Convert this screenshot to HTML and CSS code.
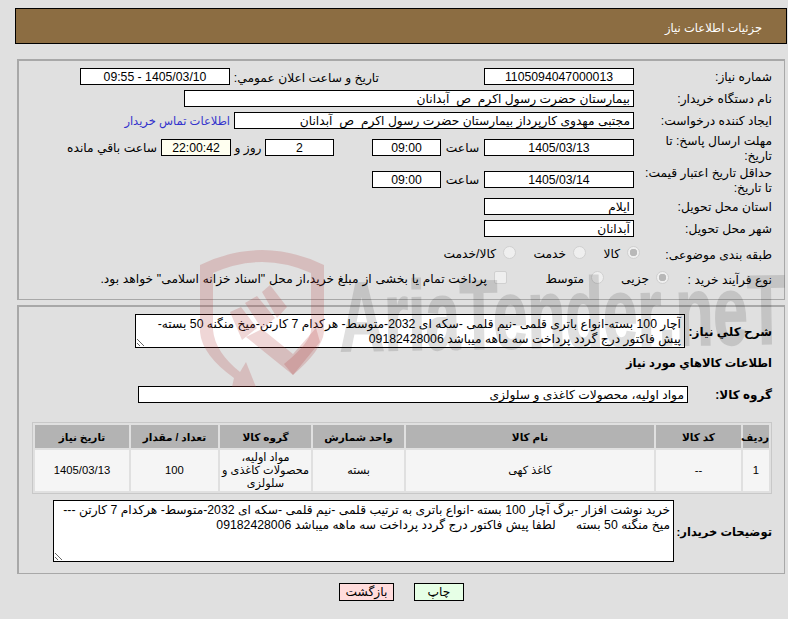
FILE: index.html
```html
<!DOCTYPE html>
<html lang="fa" dir="rtl">
<head>
  <meta charset="UTF-8">
  <title>جزئیات اطلاعات نیاز</title>
  <link rel="stylesheet" href="styles.css">
</head>
<body>
  <header class="title-bar">جزئیات اطلاعات نیاز</header>

  <!-- Need details -->
  <section class="panel panel-top">
    <div class="row">
      <label class="lbl">شماره نیاز:</label>
      <div class="box w150 center">1105094047000013</div>
      <label class="lbl-public">تاریخ و ساعت اعلان عمومي:</label>
      <div class="box w150 center">1405/03/10 - 09:55</div>
    </div>
    <div class="row">
      <label class="lbl">نام دستگاه خریدار:</label>
      <div class="box w450">بیمارستان حضرت رسول اکرم &nbsp;ص &nbsp;آبدانان</div>
    </div>
    <div class="row">
      <label class="lbl">ایجاد کننده درخواست:</label>
      <div class="box w400">مجتبی مهدوی کارپرداز بیمارستان حضرت رسول اکرم &nbsp;ص &nbsp;آبدانان</div>
      <a class="contact" href="#">اطلاعات تماس خریدار</a>
    </div>
    <div class="row row-tall">
      <label class="lbl">مهلت ارسال پاسخ: تا تاریخ:</label>
      <div class="box w150 center">1405/03/13</div>
      <span class="word word-hour">ساعت</span>
      <div class="box w69 center">09:00</div>
      <div class="box w69 days center">2</div>
      <span class="word word-day">روز و</span>
      <div class="box clock center">22:00:42</div>
      <span class="word word-left">ساعت باقي مانده</span>
    </div>
    <div class="row row-tall">
      <label class="lbl">حداقل تاریخ اعتبار قیمت: تا تاریخ:</label>
      <div class="box w150 center">1405/03/14</div>
      <span class="word word-hour">ساعت</span>
      <div class="box w69 center">09:00</div>
    </div>
    <div class="row">
      <label class="lbl">استان محل تحویل:</label>
      <div class="box w150">ایلام</div>
    </div>
    <div class="row">
      <label class="lbl">شهر محل تحویل:</label>
      <div class="box w150">آبدانان</div>
    </div>
    <div class="row row-options subject">
      <label class="lbl">طبقه بندی موضوعی:</label>
      <input class="radio" type="radio" name="subject" checked disabled><span class="opt opt-goods">کالا</span>
      <input class="radio" type="radio" name="subject" disabled><span class="opt opt-service">خدمت</span>
      <input class="radio" type="radio" name="subject" disabled><span class="opt">کالا/خدمت</span>
    </div>
    <div class="row row-options process">
      <label class="lbl">نوع فرآیند خرید :</label>
      <input class="radio" type="radio" name="process" checked disabled><span class="opt opt-minor">جزیی</span>
      <input class="radio" type="radio" name="process" disabled><span class="opt opt-medium">متوسط</span>
      <input class="check" type="checkbox" disabled><span class="opt opt-long">پرداخت تمام یا بخشی از مبلغ خرید،از محل "اسناد خزانه اسلامی" خواهد بود.</span>
    </div>
  </section>

  <!-- Goods -->
  <section class="panel panel-goods">
    <div class="row row-desc">
      <label class="lbl strong">شرح کلي نیاز:</label>
      <textarea class="area area-need" readonly>آچار 100 بسته-انواع باتری قلمی -نیم قلمی -سکه ای 2032-متوسط- هرکدام 7 کارتن-میخ منگنه 50 بسته- پیش فاکتور درج گردد پرداخت سه ماهه میباشد 09182428006</textarea>
    </div>
    <h3 class="goods-head">اطلاعات کالاهاي مورد نیاز</h3>
    <div class="row row-group">
      <label class="lbl strong">گروه کالا:</label>
      <div class="box w550">مواد اولیه، محصولات کاغذی و سلولزی</div>
    </div>
    <table class="goods">
      <thead>
        <tr>
          <th class="c-row">ردیف</th>
          <th class="c-code">کد کالا</th>
          <th class="c-name">نام کالا</th>
          <th class="c-unit">واحد شمارش</th>
          <th class="c-group">گروه کالا</th>
          <th class="c-qty">تعداد / مقدار</th>
          <th class="c-date">تاریخ نیاز</th>
        </tr>
      </thead>
      <tbody>
        <tr>
          <td>1</td>
          <td>--</td>
          <td>کاغذ کهی</td>
          <td>بسته</td>
          <td>مواد اولیه، محصولات کاغذی و سلولزی</td>
          <td>100</td>
          <td>1405/03/13</td>
        </tr>
      </tbody>
    </table>
    <div class="row row-notes">
      <label class="lbl strong">توضیحات خریدار:</label>
      <textarea class="area area-notes" readonly>خرید نوشت افزار -برگ آچار 100 بسته -انواع باتری به ترتیب قلمی -نیم قلمی -سکه ای 2032-متوسط- هرکدام 7 کارتن --- میخ منگنه 50 بسته      لطفا پیش فاکتور درج گردد پرداخت سه ماهه میباشد 09182428006</textarea>
    </div>
  </section>

  <div class="actions">
    <button class="btn btn-print" type="button">چاپ</button>
    <button class="btn btn-back" type="button">بازگشت</button>
  </div>

  <!-- Watermark over the page -->
  <svg class="watermark" width="788" height="619" viewBox="0 0 788 619" aria-hidden="true">
    <g class="mark-red">
      <path d="M200 265 Q262 235 324 265 L324 332 Q322 350 293 375 L284 364 Q311 342 311 330 L311 273 Q262 251 213 273 L213 330 Q215 352 240 372 L246 362 L256 387 L232 387 L234 378 Q202 355 200 332 Z"/>
      <polygon points="230,312 241,307 257,328 242,340"/>
      <polygon points="245,303 257,296 275,318 262,329"/>
      <polygon points="262,292 270,285 287,307 277,318"/>
      <polygon points="246,337 262,329 293,354 316,328 320,342 293,375"/>
    </g>
    <text class="mark-text" x="340" y="351" textLength="446" lengthAdjust="spacingAndGlyphs" transform="rotate(-1 340 351)">AriaTender.neT</text>
  </svg>
</body>
</html>
```

FILE: styles.css
```css
/* Reset & base */
* { box-sizing: border-box; }
body { margin: 0; padding: 8px 0 0 15px; width: 788px; height: 619px; overflow: hidden; position: relative; background: #e0e0e0; color: #000; font-family: "Liberation Sans", "DejaVu Sans", sans-serif; font-size: 12.25px; }

/* Header */
.title-bar { height: 36px; line-height: 38px; margin-right: 1px; padding-right: 24px; background: #8c6d42; border: 1px solid #000; color: #fff; font-size: 11.5px; }

/* Panels */
.panel { margin: 0 3px 0 2px; border: 1px solid #a8a8a8; border-width: 2px 1px 1px 2px; padding: 0 12px; }
.panel-top { margin-top: 15px; height: 241px; padding-top: 7px; }
.panel-goods { margin-top: 5px; height: 269px; padding-top: 7px; }

/* Form rows */
.row { display: flex; align-items: center; min-height: 17px; margin-bottom: 5px; }
.row-tall { height: 27px; }
.row-options { height: 24px; margin-bottom: 1px; }
.lbl { flex: none; width: 138px; padding: 2px 0 0 7px; line-height: 15px; }
.lbl-public { flex: none; width: 144px; margin: 0 105px 0 5px; padding-top: 2px; white-space: nowrap; }
.strong { font-weight: bold; font-size: 12px; white-space: nowrap; }

.box { flex: none; height: 17px; line-height: 16px; padding: 0 3px; background: #fff; border: 1px solid #000; white-space: nowrap; overflow: hidden; }
.center { text-align: center; }
.w69 { width: 69px; }
.w150 { width: 150px; }
.w400 { width: 400px; }
.w450 { width: 450px; }
.w550 { width: 550px; }
.clock { width: 70px; background: #fffff0; }
.days { margin-right: 38px; }
.contact { margin-right: 4px; padding-top: 1px; color: #3333cc; font-size: 11.5px; text-decoration: none; white-space: nowrap; }

.word { flex: none; padding-top: 1px; white-space: nowrap; }
.word-hour { width: 43px; text-align: center; }
.word-day { width: 34px; text-align: center; }
.word-left { margin-right: 4px; }

/* Options */
.radio, .check { appearance: none; flex: none; margin: 0; width: 13px; height: 13px; background: #efefef; border: 1px solid #d0d0d0; position: relative; top: -2px; }
.radio { border-radius: 50%; }
.radio:checked { background: radial-gradient(circle, #b8b8b8 0 3.5px, #efefef 4px); }
.check { border-radius: 2px; }
.opt { margin-right: 7px; white-space: nowrap; }
.subject .lbl { width: 132px; }
.process .lbl { width: 103px; }
.opt-goods { width: 34px; }
.opt-service { width: 50px; }
.opt-minor { width: 45px; }
.opt-medium { width: 77px; }
.opt-long { word-spacing: 0.4px; }

/* Text areas */
.area { flex: none; display: block; padding: 2px 3px 0; background: #fff; border: 1px solid #000; border-radius: 0; font: inherit; line-height: 15px; color: #000; overflow: hidden; outline: none; }
.area-need { width: 550px; height: 34px; }
.area-notes { width: 621px; height: 62px; }
.row-desc { margin-bottom: 0; }
.row-desc .lbl { width: 87px; padding-left: 0; }
.row-notes { margin: 6px 0 0; }
.row-notes .lbl { width: 98px; padding-left: 0; font-size: 11.5px; }
.row-group { margin-bottom: 0; }
.row-group .lbl { width: 84px; padding-left: 0; }
.goods-head { margin: 7px 0 15px; font-size: 11.5px; line-height: 16px; }

/* Goods table */
.goods { width: 740px; margin: 19px 0 0; border: 1px solid #c8c8c8; border-spacing: 2px; table-layout: fixed; text-align: center; }
.goods th { height: 23px; padding: 0; background: #b3b3b3; font-size: 10.5px; }
.goods td { height: 41px; padding: 0; background: #f5f5f5; line-height: 13px; font-size: 11.25px; }
.c-row { width: 26px; }
.c-code { width: 85px; }
.c-name { width: 248px; }
.c-unit { width: 91px; }
.c-group { width: 91px; }
.c-qty { width: 87px; }
.c-date { width: 94px; }

/* Buttons */
.actions { display: flex; justify-content: center; gap: 20px; margin-top: 9px; }
.btn { width: 50px; height: 18px; padding: 0; border: 1px solid #000; border-radius: 0; font: inherit; color: #000; }
.btn-print { background: #e6ffe6; }
.btn-back { width: 55px; background: #ffdcdc; }

/* Watermark */
.watermark { position: absolute; left: 0; top: 0; pointer-events: none; direction: ltr; }
.mark-red { fill: #b03030; fill-opacity: 0.2; }
.mark-text { font-family: "Liberation Sans", sans-serif; font-weight: bold; font-size: 98px; fill: #000; stroke: #000; stroke-width: 2px; opacity: 0.12; direction: ltr; }
```
